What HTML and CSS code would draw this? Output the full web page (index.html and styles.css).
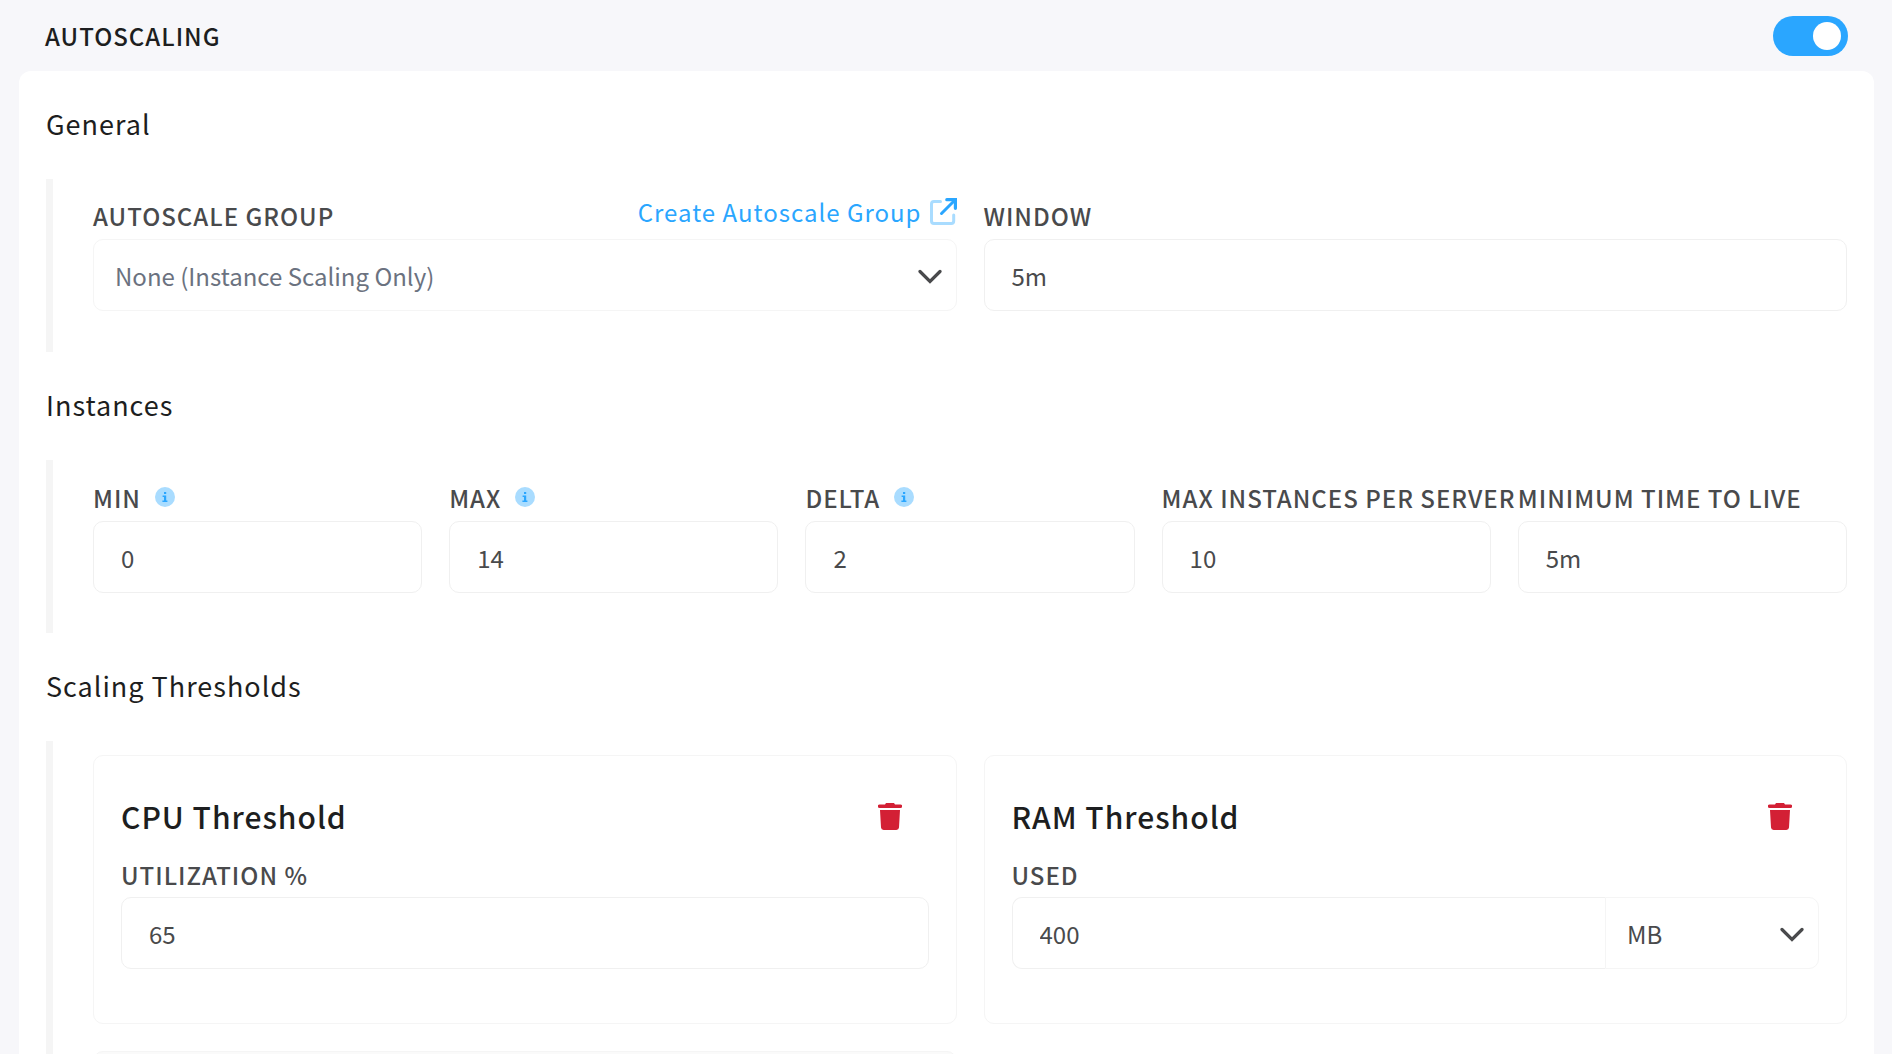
FILE: index.html
```html
<!DOCTYPE html>
<html lang="en">
<head>
  <meta charset="utf-8">
  <meta name="viewport" content="width=device-width, initial-scale=1">
  <title>Autoscaling</title>
  <link rel="stylesheet" href="styles.css">
</head>
<body>
  <svg class="sprite" aria-hidden="true">
    <symbol id="chevron" viewBox="0 0 24 16">
      <path d="M2 2.500 12 12.500l10-10" fill="none" stroke="currentColor" stroke-width="3.200" stroke-linecap="round" stroke-linejoin="miter"/>
    </symbol>
    <symbol id="info" viewBox="0 0 20 20">
      <circle cx="10" cy="10" r="10" fill="#a9dcff"/>
      <path d="M9 5h2.200v2H9zM7.600 8.400h3.600v5h1.200V15H7.400v-1.600H9v-3.400H7.600z" fill="#2aa6ff"/>
    </symbol>
    <symbol id="external" viewBox="0 0 28 28">
      <path d="M11.500 3.500H5A2.500 2.500 0 0 0 2.500 6v17A2.500 2.500 0 0 0 5 25.500h17.200a2.500 2.500 0 0 0 2.500-2.500v-6" fill="none" stroke="#a9dcff" stroke-width="3" stroke-linecap="round"/>
      <path d="M12.500 15.500 25.500 2.500" fill="none" stroke="#2aa6ff" stroke-width="3" stroke-linecap="round"/>
      <path d="M17.800 1.700h8.600v8.600" fill="none" stroke="#2aa6ff" stroke-width="3.200" stroke-linecap="round"/>
    </symbol>
    <symbol id="trash" viewBox="0 0 24 27">
      <path d="M8 0h8l1 1.500h5.500a1.500 1.500 0 0 1 0 3.500h-21a1.500 1.500 0 0 1 0-3.500H7zM2 7h20l-1 17.500A2.700 2.700 0 0 1 18.300 27H5.700A2.700 2.700 0 0 1 3 24.500z" fill="currentColor"/>
    </symbol>
  </svg>

  <main class="page">
    <header class="page-header">
      <h1 class="page-title"><label for="autoscaling">AUTOSCALING</label></h1>
      <input class="toggle" type="checkbox" role="switch" id="autoscaling" checked>
    </header>

    <form class="panel">
      <section>
        <h2 class="section-title">General</h2>
        <div class="group columns-2">
          <div class="field">
            <div class="field-head">
              <label class="label" for="group">AUTOSCALE GROUP</label>
              <a class="link" href="#new-group">Create Autoscale Group
                <svg class="icon-external" aria-hidden="true"><use href="#external"/></svg></a>
            </div>
            <div class="select">
              <select class="control muted" id="group"><option>None (Instance Scaling Only)</option></select>
              <svg class="chevron" aria-hidden="true"><use href="#chevron"/></svg>
            </div>
          </div>
          <div class="field">
            <div class="field-head"><label class="label" for="window">WINDOW</label></div>
            <input class="control" id="window" type="text" value="5m">
          </div>
        </div>
      </section>

      <section>
        <h2 class="section-title">Instances</h2>
        <div class="group columns-5">
          <div class="field">
            <div class="field-head"><label class="label" for="min">MIN</label><svg class="icon-info" aria-hidden="true"><use href="#info"/></svg></div>
            <input class="control" id="min" type="text" value="0">
          </div>
          <div class="field">
            <div class="field-head"><label class="label" for="max">MAX</label><svg class="icon-info" aria-hidden="true"><use href="#info"/></svg></div>
            <input class="control" id="max" type="text" value="14">
          </div>
          <div class="field">
            <div class="field-head"><label class="label" for="delta">DELTA</label><svg class="icon-info" aria-hidden="true"><use href="#info"/></svg></div>
            <input class="control" id="delta" type="text" value="2">
          </div>
          <div class="field">
            <div class="field-head"><label class="label" for="per-server">MAX INSTANCES PER SERVER</label></div>
            <input class="control" id="per-server" type="text" value="10">
          </div>
          <div class="field">
            <div class="field-head"><label class="label" for="ttl">MINIMUM TIME TO LIVE</label></div>
            <input class="control" id="ttl" type="text" value="5m">
          </div>
        </div>
      </section>

      <section>
        <h2 class="section-title">Scaling Thresholds</h2>
        <div class="group columns-2 cards">
          <article class="card">
            <div class="card-head">
              <h3 class="card-title">CPU Threshold</h3>
              <button class="delete" type="button" aria-label="Delete CPU threshold"><svg class="icon-trash" aria-hidden="true"><use href="#trash"/></svg></button>
            </div>
            <label class="label card-label" for="cpu">UTILIZATION %</label>
            <input class="control" id="cpu" type="text" value="65">
          </article>
          <article class="card">
            <div class="card-head">
              <h3 class="card-title">RAM Threshold</h3>
              <button class="delete" type="button" aria-label="Delete RAM threshold"><svg class="icon-trash" aria-hidden="true"><use href="#trash"/></svg></button>
            </div>
            <label class="label card-label" for="ram">USED</label>
            <div class="joined">
              <input class="control" id="ram" type="text" value="400">
              <div class="select">
                <select class="control" aria-label="Unit"><option>MB</option></select>
                <svg class="chevron" aria-hidden="true"><use href="#chevron"/></svg>
              </div>
            </div>
          </article>
          <article class="card card-empty"></article>
        </div>
      </section>
    </form>
  </main>
</body>
</html>
```
FILE: styles.css
```css
* {
  box-sizing: border-box;
}

body {
  margin: 0;
  background: #f7f7fa;
  color: #1d1e20;
  font-family: "Noto Sans CJK SC", "Noto Sans", sans-serif;
  font-size: 24px;
}

.sprite {
  display: none;
}

.page {
  height: 100vh;
  overflow: hidden;
  padding: 0 18px 0 19px;
}

.page-header {
  display: flex;
  align-items: center;
  justify-content: space-between;
  height: 71px;
  padding: 0 26px;
}

.page-title {
  margin: 0;
  font-size: 24px;
  font-weight: 500;
  line-height: 36px;
  letter-spacing: 1px;
}

.toggle {
  appearance: none;
  display: flex;
  align-items: center;
  justify-content: flex-end;
  width: 75px;
  height: 40px;
  margin: 0;
  padding: 0 7px;
  border-radius: 20px;
  background: #2aa6ff;
}

.toggle::before {
  content: "";
  width: 28px;
  height: 28px;
  border-radius: 50%;
  background: #fff;
}

.toggle:not(:checked) {
  justify-content: flex-start;
  background: #c4c6cc;
}

.panel {
  min-height: 100%;
  padding: 0 27px;
  border-radius: 12px;
  background: #fff;
}

.section-title {
  margin: 0;
  padding: 35px 0 37px;
  font-size: 27px;
  font-weight: 400;
  line-height: 36px;
  letter-spacing: 1px;
}

.group {
  display: grid;
  gap: 27px;
  padding: 0 0 41px 40px;
  border-left: 7px solid #f5f5f5;
}

.columns-2 {
  grid-template-columns: repeat(2, minmax(0, 1fr));
}

.columns-5 {
  grid-template-columns: repeat(5, minmax(0, 1fr));
  padding-top: 1px;
  padding-bottom: 40px;
}

.field-head {
  display: flex;
  align-items: flex-start;
  height: 60px;
  padding-top: 15px;
  white-space: nowrap;
}

.label {
  color: #494a4c;
  font-size: 24px;
  font-weight: 500;
  line-height: 44px;
  letter-spacing: 1px;
}

.link {
  display: flex;
  align-items: center;
  gap: 7px;
  margin-left: auto;
  color: #2aa6ff;
  line-height: 36px;
  letter-spacing: 1px;
  text-decoration: none;
}

.icon-external {
  width: 28px;
  height: 28px;
}

.icon-info {
  width: 20px;
  height: 20px;
  margin: 11px 0 0 14px;
}

.control {
  appearance: none;
  display: block;
  width: 100%;
  height: 72px;
  margin: 0;
  padding: 0 27px;
  border: 1px solid #f0f0f0;
  border-radius: 10px;
  outline: 0;
  background: #fff;
  color: #494a4c;
  font: inherit;
}

.select {
  display: grid;
  align-items: center;
}

.select > * {
  grid-area: 1 / 1;
}

.select .control {
  padding: 0 54px 0 21px;
  border-color: #f5f5f5;
}

.select .muted {
  color: #6b7280;
}

.chevron {
  justify-self: end;
  width: 24px;
  height: 16px;
  margin: 4px 15px 0 0;
  color: #494a4c;
  pointer-events: none;
}

.cards {
  padding-top: 14px;
}

.card {
  padding: 27px 27px 54px;
  border: 1px solid #f5f5f5;
  border-radius: 10px;
}

.card-head {
  display: flex;
  align-items: center;
  justify-content: space-between;
  height: 66px;
  margin-bottom: 4px;
  padding-right: 27px;
}

.card-title {
  margin: 0;
  font-size: 30px;
  font-weight: 500;
  line-height: 44px;
  letter-spacing: 1px;
}

.card-label {
  display: block;
}

.delete {
  display: flex;
  padding: 0;
  border: 0;
  background: none;
  color: #d32035;
}

.icon-trash {
  width: 24px;
  height: 27px;
}

.joined {
  display: grid;
  grid-template-columns: minmax(0, 1fr) 214px;
}

.joined > .control {
  border-right: 0;
  border-radius: 10px 0 0 10px;
}

.joined .select .control {
  border-radius: 0 10px 10px 0;
}

.card-empty {
  min-height: 270px;
  background: #fafafa;
}
```
